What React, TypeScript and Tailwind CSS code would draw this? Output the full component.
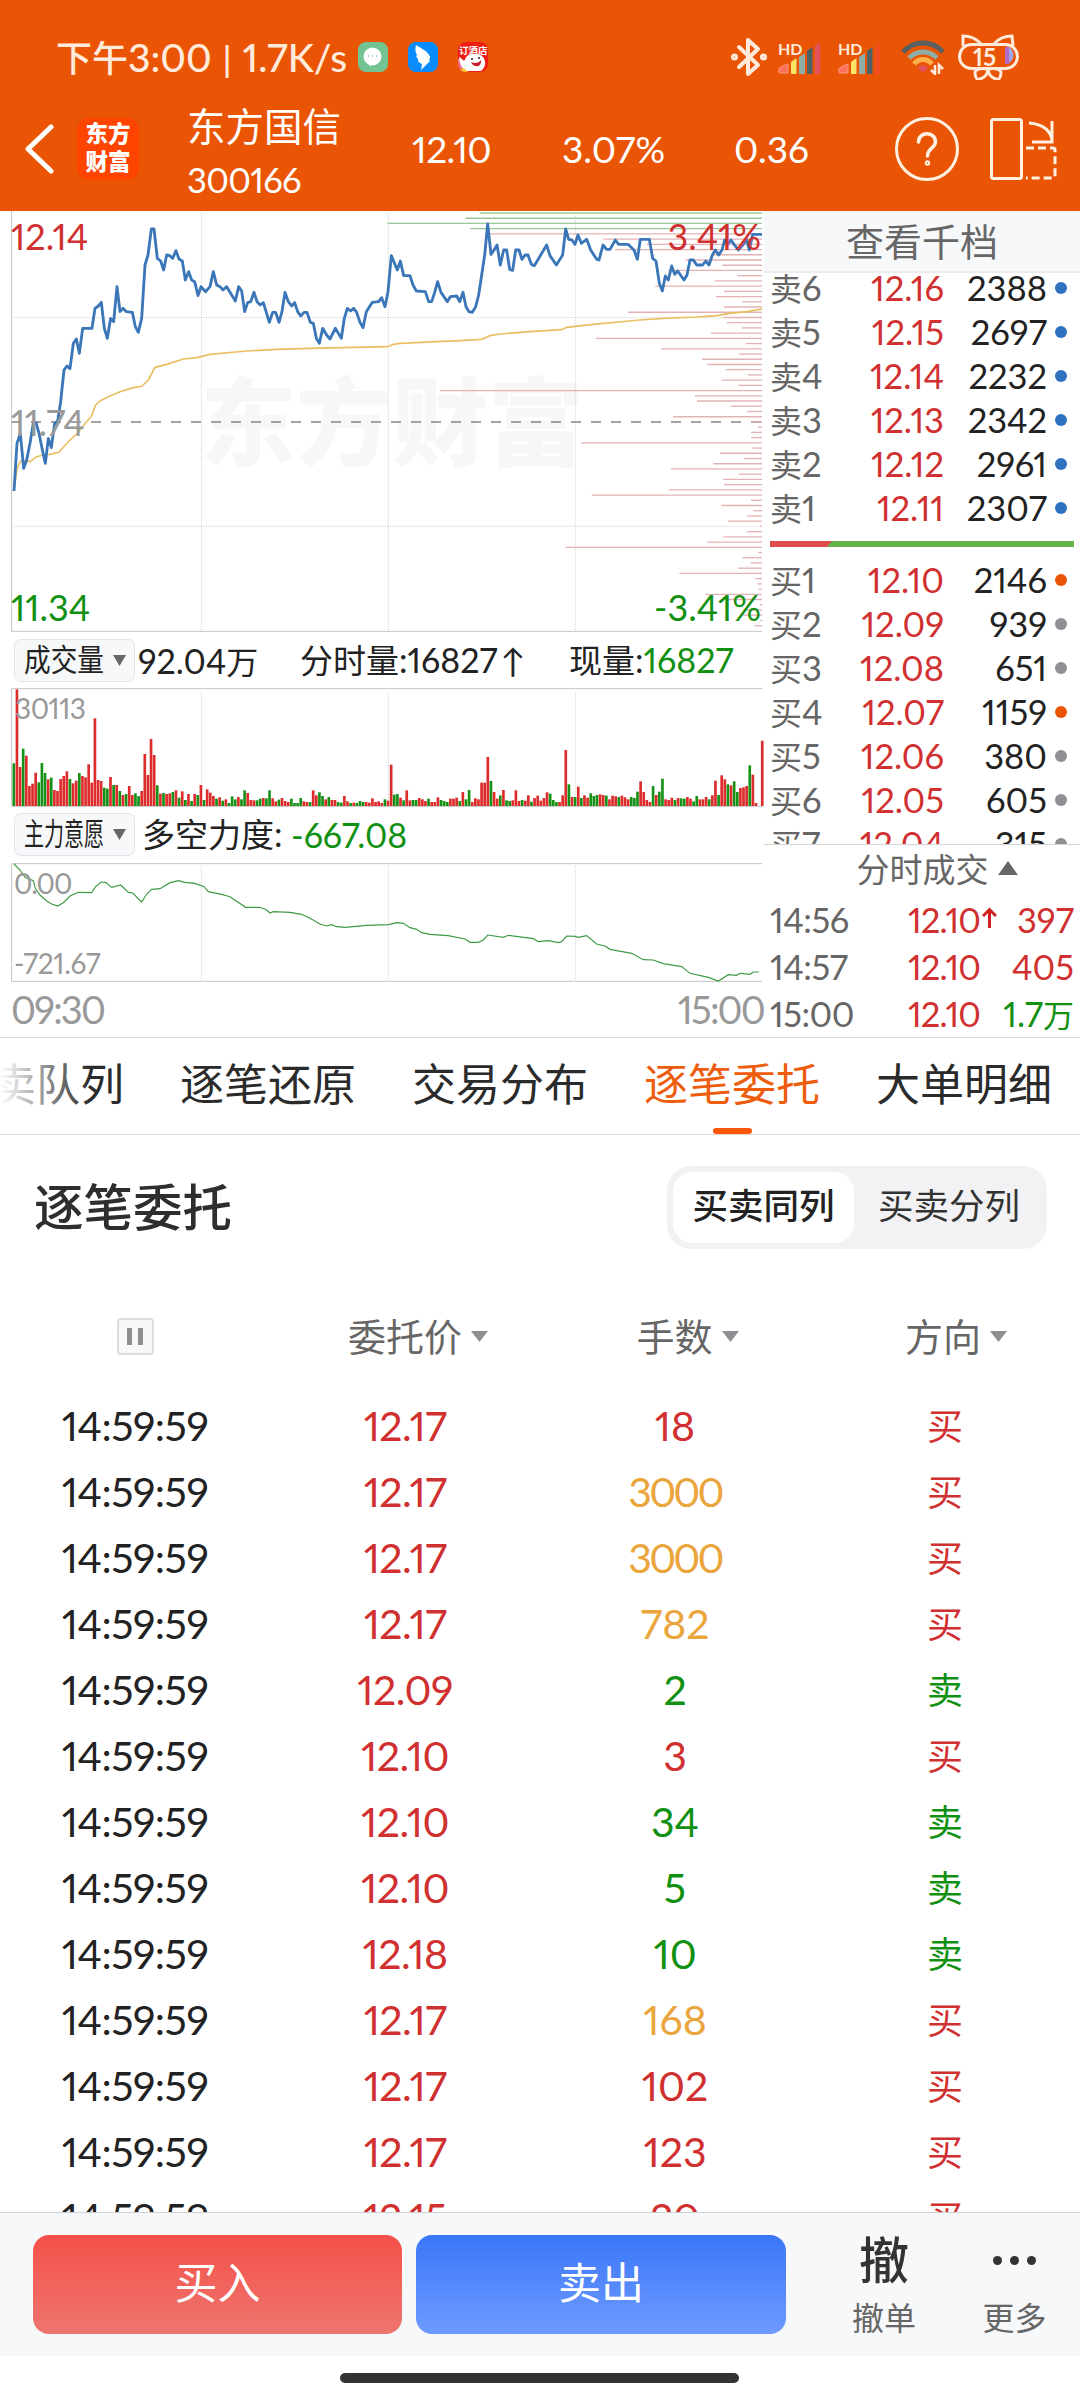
import type { ReactNode } from 'react';

type Level = { name: string; price: string; qty: string; dot: string };

const sells: Level[] = [
  { name: '卖6', price: '12.16', qty: '2388', dot: 'bg-[#2f72c0]' },
  { name: '卖5', price: '12.15', qty: '2697', dot: 'bg-[#2f72c0]' },
  { name: '卖4', price: '12.14', qty: '2232', dot: 'bg-[#2f72c0]' },
  { name: '卖3', price: '12.13', qty: '2342', dot: 'bg-[#2f72c0]' },
  { name: '卖2', price: '12.12', qty: '2961', dot: 'bg-[#2f72c0]' },
  { name: '卖1', price: '12.11', qty: '2307', dot: 'bg-[#2f72c0]' },
];

const buys: Level[] = [
  { name: '买1', price: '12.10', qty: '2146', dot: 'bg-[#e95504]' },
  { name: '买2', price: '12.09', qty: '939', dot: 'bg-[#8f8f94]' },
  { name: '买3', price: '12.08', qty: '651', dot: 'bg-[#8f8f94]' },
  { name: '买4', price: '12.07', qty: '1159', dot: 'bg-[#e95504]' },
  { name: '买5', price: '12.06', qty: '380', dot: 'bg-[#8f8f94]' },
  { name: '买6', price: '12.05', qty: '605', dot: 'bg-[#8f8f94]' },
  { name: '买7', price: '12.04', qty: '315', dot: 'bg-[#8f8f94]' },
];

const RED = 'text-[#d0302f]';
const GREEN = 'text-[#129012]';
const GOLD = 'text-[#eaa53c]';

const orders = [
  { price: '12.17', qty: '18', color: RED, side: '买' },
  { price: '12.17', qty: '3000', color: GOLD, side: '买' },
  { price: '12.17', qty: '3000', color: GOLD, side: '买' },
  { price: '12.17', qty: '782', color: GOLD, side: '买' },
  { price: '12.09', qty: '2', color: GREEN, side: '卖' },
  { price: '12.10', qty: '3', color: RED, side: '买' },
  { price: '12.10', qty: '34', color: GREEN, side: '卖' },
  { price: '12.10', qty: '5', color: GREEN, side: '卖' },
  { price: '12.18', qty: '10', color: GREEN, side: '卖' },
  { price: '12.17', qty: '168', color: GOLD, side: '买' },
  { price: '12.17', qty: '102', color: RED, side: '买' },
  { price: '12.17', qty: '123', color: RED, side: '买' },
  { price: '12.15', qty: '20', color: RED, side: '买' },
];

// chart data, three units to a pixel
const priceLine =
  '42,858 51,715 61,685 71,790 80,765 90,715 100,655 108,653 117,685 126,730 136,775 145,700 154,728 164,655 173,648 182,590 192,495 201,483 210,491 220,415 229,402 238,445 248,370 276,370 285,310 295,303 304,292 313,370 322,400 332,340 341,350 351,245 360,320 369,310 379,320 397,322 406,365 415,382 425,340 435,180 444,150 454,72 462,72 472,160 482,168 491,195 500,150 509,152 518,160 528,137 537,162 547,168 556,225 566,200 575,225 584,230 594,272 603,245 617,260 630,245 640,200 650,240 660,245 669,255 680,245 706,288 716,245 725,258 734,320 743,293 752,290 762,262 771,290 781,300 790,293 808,352 818,322 827,322 837,352 846,320 855,262 865,290 875,303 884,293 893,320 902,333 912,322 921,322 931,352 940,355 949,400 958,415 968,370 980,390 990,402 1006,370 1024,400 1033,340 1042,310 1052,318 1061,310 1070,322 1080,352 1089,368 1099,320 1117,292 1136,290 1145,278 1155,305 1164,260 1174,152 1192,195 1201,168 1211,212 1230,212 1239,240 1249,258 1276,260 1286,290 1295,290 1304,262 1313,230 1323,262 1342,290 1351,275 1370,273 1379,290 1389,262 1398,305 1407,320 1417,322 1427,305 1436,270 1445,210 1454,150 1463,57 1473,148 1482,135 1491,120 1501,180 1511,135 1520,135 1529,193 1538,196 1547,135 1557,135 1566,163 1575,150 1584,150 1594,178 1603,182 1640,120 1650,152 1669,180 1688,150 1697,72 1706,103 1716,105 1725,118 1734,90 1744,115 1760,103 1772,135 1790,163 1797,165 1809,120 1820,133 1830,133 1846,105 1856,118 1884,118 1902,135 1912,163 1921,103 1948,103 1958,160 1968,168 1978,235 1987,258 1996,213 2005,225 2015,183 2024,208 2033,198 2052,225 2061,210 2070,165 2080,165 2090,180 2108,180 2117,168 2127,180 2137,150 2146,135 2156,150 2166,135 2174,105 2183,118 2193,105 2202,118 2215,135 2230,118 2240,103 2248,135 2258,88 2286,88';

const averageLine =
  '42,858 51,790 62,768 90,770 110,755 130,750 150,748 176,742 210,705 232,685 250,662 275,632 287,600 300,588 325,575 360,560 400,548 425,544 445,525 465,487 500,478 550,462 590,458 630,448 740,438 830,433 930,430 1060,427 1164,425 1180,418 1200,415 1310,410 1380,407 1445,403 1470,392 1500,387 1590,380 1685,374 1700,367 1780,358 1920,345 1990,340 2090,336 2150,332 2190,325 2240,320 2286,312';

const forceLine =
  '42,702 60,720 75,742 100,752 106,775 120,795 140,813 155,822 173,828 190,818 210,798 235,787 275,788 287,770 303,756 318,758 335,772 362,765 385,787 398,789 425,816 440,792 455,778 480,776 510,758 535,752 555,757 585,760 612,770 625,785 665,793 690,800 737,832 780,832 800,840 810,849 820,845 870,847 905,853 930,865 960,882 980,888 995,884 1010,890 1035,892 1100,886 1165,884 1190,878 1210,880 1230,893 1250,898 1265,908 1290,913 1345,917 1395,927 1410,937 1435,937 1450,930 1463,915 1510,922 1525,916 1600,926 1615,935 1645,932 1675,938 1685,935 1700,918 1725,919 1735,922 1760,917 1790,942 1815,948 1830,958 1895,970 1930,989 1960,990 1990,1001 2045,1010 2070,1030 2125,1042 2155,1053 2185,1034 2210,1036 2220,1030 2250,1033 2260,1026 2277,1026';

// left end of each chip-distribution bar, top to bottom
const chips = [
  1439, 1397, 1162, 1410, 1465, 1810, 1940, 1846, 2140, 2057, 2167, 2005, 2212, 2145, 1966, 2172, 2147, 2227, 2172, 1884,
  2170, 2180, 2225, 2133, 1788, 2237, 1983, 2217, 2106, 2122, 2178, 2244, 2165, 2215, 1320, 2084, 2091, 2192, 2242, 2019,
  2254, 2274, 2253, 2254, 1743, 2258, 2160, 2232, 2140, 2013, 2217, 2169, 2172, 2007, 1775, 2253, 2165, 2260, 2242, 2184,
  2280, 2240, 2170, 2122, 1696, 2274, 2227, 2252, 2214, 2038, 2266, 2272, 2276, 2115, 2180, 2280, 2230, 2230, 2280, 2263,
];

const volumes =
  'G128 R350 R117 G172 R151 R60 R67 R100 G71 G129 G99 R80 G85 R48 R45 R81 R90 R104 G81 R68 R76 G99 R90 R86 R125 R70 R263 R78 R75 G55 G52 R87 G63 R63 G45 R33 G36 R60 R33 G38 G30 R45 R156 R93 R201 R153 G62 R37 G39 R36 R38 G42 R47 G25 R44 G18 R36 G15 R36 G33 R63 G18 R50 R40 R30 G22 R26 G16 R20 G9 G29 G20 R27 G20 G47 R39 R18 R17 G17 G22 R24 G23 G47 R23 R14 G19 R24 R15 R12 G22 G9 G9 G24 R14 R12 G12 R47 R32 G41 G30 R20 G27 R18 R18 G12 G10 R30 R14 G9 R10 G9 G15 G12 R12 R10 R23 R12 R14 R9 G20 R16 R124 G34 G36 R25 G17 R47 R17 G18 G18 R24 R20 R15 G22 R12 R12 R26 G18 G15 G12 R22 R22 R25 G15 R42 G20 G48 R12 R23 R20 R70 R70 R147 G75 R42 R22 G32 R48 G17 G15 R17 R47 R15 G18 R16 R32 G13 R24 R31 R16 R24 R41 G37 G18 G12 R12 R32 R168 G65 R27 G27 R58 G24 R32 R25 G38 G30 G33 R35 R33 G31 R20 R31 R29 G27 R31 R26 R20 G27 G24 G43 R74 R42 R18 R12 G60 R33 G43 G82 R20 R18 R25 G18 R24 G23 G22 R27 R22 G14 G30 R20 R20 R27 G20 R32 R76 G33 R92 R80 G65 R62 G74 G42 R54 R56 R60 G122 R94 R9 R0 R196'.split(
    ' ',
  );

function Grid({ top, bottom }: { top: number; bottom: number }) {
  return (
    <g stroke="#c4c4c4" strokeWidth="3" strokeDasharray="3 5">
      {[604, 1165, 1726].map((x) => (
        <line key={x} x1={x} x2={x} y1={top} y2={bottom} />
      ))}
    </g>
  );
}

function Signal({ faded }: { faded?: boolean }) {
  return (
    <div className="relative h-[35px] w-[43px]">
      <svg className="h-full w-full" viewBox="0 0 43 35">
        <path d="M1 33v-4q0-2 9-5v9z" fill="#ff6f5c" stroke="#ff9a78" strokeWidth="1" />
        <path d="M13 34V22l5.500-4v16z" fill="#ffe566" />
        <path d="M21 34V17l6-4v21z" fill="#8fada5" />
        <path d="M29 34V11l5.500-4v27z" fill="#4f6165" />
        <path d="M37 34V6l5.500-4v32z" fill={faded ? '#f0501c' : '#e4525c'} />
      </svg>
      <span className="absolute top-[1px] left-0 text-[16px] leading-[16px] font-bold text-[#ffeadb]">HD</span>
    </div>
  );
}

function StatusBar() {
  return (
    <div className="flex h-[114px] items-center pl-[56px] text-[#ffeadb]">
      <div className="w-[302px] text-[39px] font-medium whitespace-nowrap">
        <span className="text-[36px]">下午</span>
        <span>3:00</span>
        <span className="px-[11px] text-[34px] font-semibold">|</span>
        <span>1.7K/s</span>
      </div>
      <div className="flex gap-5">
        <svg className="size-[30px]" viewBox="0 0 30 30">
          <rect width="30" height="30" rx="8" fill="#73c393" />
          <circle cx="14.500" cy="14.500" r="9" fill="#fff" />
          <path d="M10 21l2 3 3-2z" fill="#fff" />
          <path d="M10 14h1M14 14h1M18 14h1" stroke="#73c393" strokeWidth="1.500" />
        </svg>
        <svg className="size-[30px]" viewBox="0 0 30 30">
          <rect width="30" height="30" rx="8" fill="#0a8cff" />
          <path d="M8 3c5 3 11 6 13 10 1 1 2 2 0 5l1 1-9 9 1-6-2-1c-2-1-2-2-2-4-2-2-2-3-1-4-2-3-2-7-1-10z" fill="#fff" />
        </svg>
        <div className="relative size-[30px] overflow-hidden rounded-[8px] bg-[#ee1c12]">
          <svg className="h-full w-full" viewBox="0 0 30 30">
            <path d="M0 17l6 1 3 12H0z" fill="#f36a8a" />
            <path d="M9 14c4-3 12-3 16 1 4 5 2 11-2 14H9C4 26 2 24 1 15c2 0 3 3 5 4z" fill="#fff" />
            <path d="M13 20c4 2 8 1 10-2 1 7-7 9-10 2z" fill="#c81e28" />
            <circle cx="14" cy="17" r="1" fill="#222" />
            <circle cx="21" cy="16" r="1" fill="#222" />
            <path d="M1 28l5-2 4 4H1z" fill="#ffc62d" />
          </svg>
          <span className="absolute top-[3px] left-[1px] text-[9.500px] leading-[12px] font-bold whitespace-nowrap text-white">订酒店</span>
        </div>
      </div>
      <svg className="ml-[243px] h-[40px] w-[36px]" viewBox="0 0 36 40" fill="none" stroke="#ffeadb" strokeWidth="4" strokeLinejoin="round" strokeLinecap="round">
        <path d="M8 10l19 18-10 9V3l10 9L8 30" />
        <circle cx="3.500" cy="20" r="1.500" />
        <circle cx="32.500" cy="20" r="1.500" />
      </svg>
      <div className="ml-[11px] flex gap-[17px]">
        <Signal />
        <Signal faded />
      </div>
      <svg className="ml-[20px] h-[36px] w-[44px]" viewBox="0 0 44 36" fill="none" strokeWidth="5">
        <path d="M2 13C13 1 31 1 42 13" stroke="#5a605f" />
        <path d="M8 19c8-8 20-8 28 0" stroke="#8fada5" />
        <path d="M13 25c5-6 13-6 18 0" stroke="#ffae4d" />
        <path d="M22 34l-4-4c-2-4 3-5 4-2 1-3 6-2 4 2z" fill="#e4525c" />
        <path d="M34 26v9l-4-4M38 35v-9l4 4" stroke="#ffeadb" strokeWidth="2.500" />
      </svg>
      <div className="relative ml-[13px] h-[46px] w-[61px]">
        <svg className="h-full w-full" viewBox="0 0 61 46" fill="none" stroke="#ffeadb" strokeWidth="3">
          <path d="M49 13h2c6 4 6 12 0 16h-4z" fill="#a4a4ec" stroke="none" />
          <path d="M47 13h4v17h-4z" fill="#b06cc8" stroke="none" />
          <rect x="1.500" y="10.500" width="58" height="24" rx="12" />
          <path d="M5 12V2c7 0 13 2 18 8M55 12l-1-10c-7 0-13 2-18 8" />
          <path d="M30 36c-5-3-12-1-13 2 0 6 2 8 5 7 4-1 7-4 8-9zM30 36c5-3 12-1 13 2 0 6-2 8-5 7-4-1-7-4-8-9z" />
        </svg>
        <span className="absolute top-[11px] left-[15px] text-[24px] leading-[24px] font-bold">15</span>
      </div>
    </div>
  );
}

function Header() {
  return (
    <div className="flex h-[97px] text-white">
      <svg className="mt-[10px] ml-[24px] h-[50px] w-[31px]" viewBox="0 0 31 50" fill="none" stroke="currentColor" strokeWidth="5" strokeLinecap="round" strokeLinejoin="round">
        <path d="M27 3L4 25l23 22" />
      </svg>
      <div className="mt-[4px] ml-[22px] flex h-[62px] w-[62px] flex-col items-center justify-center rounded-[12px] bg-[#ff4400] pb-[2px] text-[22.500px] leading-[28px] font-black">
        <span>东方</span>
        <span>财富</span>
      </div>
      <div className="-mt-[14px] ml-[48px] w-[225px]">
        <div className="text-[38.500px] leading-[52px]">东方国信</div>
        <div className="mt-[2px] text-[34.500px] leading-[51px] tracking-[-0.7px]">300166</div>
      </div>
      <div className="-mt-[1px] flex h-[72px] items-center text-[37px]">
        <span className="w-[150px] tracking-[-0.5px]">12.10</span>
        <span className="w-[172px]">3.07%</span>
        <span className="w-[161px]">0.36</span>
      </div>
      <div className="mt-[3px] flex size-[64px] items-center justify-center rounded-full border-[3px] border-[#fff1e2]">
        <svg className="h-[34px] w-[22px]" viewBox="0 0 22 34" fill="none" stroke="#fff1e2" strokeWidth="3.500" strokeLinecap="round">
          <path d="M2.500 10c0-11 17-11 17 0 0 6-8 6-8 14" />
          <circle cx="11.500" cy="31" r="1" />
        </svg>
      </div>
      <svg className="mt-[4px] ml-[31px] h-[62px] w-[67px]" viewBox="0 0 67 62" fill="none" stroke="#fff1e2" strokeWidth="3">
        <rect x="1.500" y="1.500" width="30" height="59" rx="2" />
        <path d="M39 5c14 1 23 8 23 19M62 3v21H42" />
        <path d="M36 30h27q2 0 2 2v26q0 2-2 2H36" strokeDasharray="8 4" />
      </svg>
    </div>
  );
}

function Picker({ label, squeeze }: { label: string; squeeze: string }) {
  return (
    <div className="flex h-[43px] w-[121px] items-center justify-between rounded-[7px] border border-[#e3e4ea] bg-[#f7f8fa] pr-[8px] pl-[9px]">
      <div className="-mt-[2px] w-[80px] text-[31px] leading-[40px] whitespace-nowrap text-[#222]">
        <div className={squeeze}>{label}</div>
      </div>
      <svg className="h-[11px] w-[13px]" viewBox="0 0 13 11">
        <path d="M0 0h13L6.500 11z" fill="#666" />
      </svg>
    </div>
  );
}

function Label({ className, children }: { className: string; children: ReactNode }) {
  return <span className={'absolute whitespace-nowrap ' + className}>{children}</span>;
}

function Charts() {
  return (
    <div className="w-[764px]">
      <div className="relative h-[423px]">
        <div className="absolute top-[160px] left-[200px] text-[96px] leading-[100px] font-black text-[#f7f7f7]">东方财富</div>
        <svg className="absolute inset-0 h-full w-[763px]" viewBox="0 18 2289 1269" fill="none">
          <Grid top={24} bottom={1275} />
          <g stroke="#c4c4c4" strokeWidth="3">
            <path d="M42 338H2286M42 964H2286" strokeDasharray="3 5" />
            <path d="M35 18V1279H2286" />
          </g>
          <path d="M36 651H2286" stroke="#858585" strokeWidth="5" strokeDasharray="30 30" strokeDashoffset="3" />
          {chips.map((x, i) => (
            <line key={i} x1={x} x2="2286" y1={24 + i * 15.67} y2={24 + i * 15.67} stroke={i < 4 ? '#9cc79a' : '#e3b3b4'} strokeWidth="4" />
          ))}
          <polyline points={averageLine} stroke="#eabf62" strokeWidth="5" />
          <polyline points={priceLine} stroke="#3a76b8" strokeWidth="8.500" strokeLinejoin="round" />
        </svg>
        <Label className={'top-[3px] left-[11px] text-[36px] leading-[44px] ' + RED}>12.14</Label>
        <Label className="top-[189px] left-[11px] text-[36px] leading-[44px] tracking-[-0.5px] text-[#999]">11.74</Label>
        <Label className={'top-[374px] left-[11px] text-[36px] leading-[44px] ' + GREEN}>11.34</Label>
        <Label className={'top-[3px] right-[3px] text-[36px] leading-[44px] ' + RED}>3.41%</Label>
        <Label className={'top-[374px] right-[3px] text-[36px] leading-[44px] ' + GREEN}>-3.41%</Label>
      </div>

      <div className="flex h-[54px] items-center pb-[2px] pl-[14px] text-[34px] text-[#222]">
        <Picker label="成交量" squeeze="origin-left scale-x-[0.86]" />
        <span className="ml-[3px] w-[162px]">
          92.04<span className="text-[32px]">万</span>
        </span>
        <span className="w-[269px]">
          <span className="text-[33px]">分时量</span>:16827<span className="pl-[3px] text-[33px]">↑</span>
        </span>
        <span>
          <span className="text-[33px]">现量</span>:<span className={GREEN}>16827</span>
        </span>
      </div>

      <div className="relative h-[119px]">
        <svg className="h-full w-[764px]" viewBox="0 174 2292 357" fill="none">
          <Grid top={188} bottom={525} />
          <path d="M2286 176H35V529H2286" stroke="#c4c4c4" strokeWidth="3" />
          {volumes.map((v, i) => (
            <rect key={i} x={37.5 + i * 9.355} y={528 - Number(v.slice(1))} width="8" height={Number(v.slice(1))} fill={v[0] === 'R' ? '#dc2c2c' : '#169116'} />
          ))}
        </svg>
        <Label className="top-[3px] left-[15px] text-[28px] leading-[34px] tracking-[-0.5px] text-[#999]">30113</Label>
      </div>

      <div className="flex h-[56px] items-center pb-[2px] pl-[14px] text-[34px] text-[#222]">
        <Picker label="主力意愿" squeeze="origin-left scale-x-[0.645]" />
        <span className="ml-[7px] w-[149px] whitespace-nowrap">
          <span className="text-[33px]">多空力度</span>:
        </span>
        <span className={GREEN}>-667.08</span>
      </div>

      <div className="relative h-[119px]">
        <svg className="h-full w-[764px]" viewBox="0 699 2292 357" fill="none">
          <Grid top={708} bottom={1050} />
          <path d="M2286 701H35V1054H2286" stroke="#c4c4c4" strokeWidth="3" />
          <polyline points={forceLine} stroke="#3f9a45" strokeWidth="3.500" />
        </svg>
        <Label className="top-[3px] left-[14px] text-[28px] leading-[34px] tracking-[-1px] text-[#999]">0.00</Label>
        <Label className="top-[83px] left-[14px] text-[28px] leading-[34px] tracking-[-0.3px] text-[#999]">-721.67</Label>
      </div>

      <div className="flex h-[54px] items-center justify-between pl-[11px] text-[38px] tracking-[-1.800px] text-[#999]">
        <span>09:30</span>
        <span>15:00</span>
      </div>
    </div>
  );
}

function LevelRow({ level }: { level: Level }) {
  return (
    <div className="flex h-[44px] items-center pl-[6px] text-[34.500px] leading-[44px]">
      <span className="w-[66px] whitespace-nowrap text-[#666]">
        <span className="text-[32px]">{level.name[0]}</span>
        {level.name[1]}
      </span>
      <span className={'w-[108px] text-right ' + RED}>{level.price}</span>
      <span className="w-[103px] text-right text-[#222]">{level.qty}</span>
      <span className={'ml-[8px] size-[12px] rounded-full ' + level.dot} />
    </div>
  );
}

function TickRow({ time, price, up, qty, color }: { time: string; price: string; up?: boolean; qty: ReactNode; color: string }) {
  return (
    <div className="flex h-[47px] items-center pl-[6px] text-[34.500px]">
      <span className="w-[138px] tracking-[-0.5px] text-[#666]">{time}</span>
      <span className={'w-[72px] tracking-[-0.8px] ' + RED}>{price}</span>
      <span className="w-[16px] pl-[2px]">
        {up && (
          <svg className="mb-[3px] h-[22px] w-[15px]" viewBox="0 0 15 22" fill="none" stroke="#d0201f" strokeWidth="3">
            <path d="M7.500 21V3M1 9l6.500-6.500L14 9" />
          </svg>
        )}
      </span>
      <span className={'w-[78px] text-right whitespace-nowrap ' + color}>{qty}</span>
    </div>
  );
}

function OrderBook() {
  return (
    <div className="w-[316px]">
      <div className="flex h-[62px] items-center justify-center border-b-2 border-[#ebebed] bg-[#f7f8fa] text-[38px] text-[#666]">查看千档</div>
      <div className="-mt-[7px] h-[264px]">
        {sells.map((l) => (
          <LevelRow key={l.name} level={l} />
        ))}
      </div>
      <div className="mt-[11px] mr-[6px] ml-[6px] flex h-[6px] bg-[#63b54b]">
        <div className="w-[62px] bg-[#dd4b4b] [clip-path:polygon(0_0,100%_0,calc(100%-5px)_100%,0_100%)]" />
      </div>
      <div className="mt-[11px] h-[287px] overflow-hidden border-b border-[#d5d5d5]">
        {buys.map((l) => (
          <LevelRow key={l.name} level={l} />
        ))}
      </div>
      <div className="flex h-[51px] items-center justify-center gap-[9px] pb-[1px] pl-[30px] text-[33px] text-[#666]">
        分时成交
        <svg className="mb-[4px] h-[14px] w-[20px]" viewBox="0 0 20 14">
          <path d="M0 14h20L10 0z" fill="#666" />
        </svg>
      </div>
      <TickRow time="14:56" price="12.10" up qty="397" color={RED} />
      <TickRow time="14:57" price="12.10" qty="405" color={RED} />
      <TickRow
        time="15:00"
        price="12.10"
        qty={
          <>
            1.7<span className="text-[31px]">万</span>
          </>
        }
        color={GREEN}
      />
    </div>
  );
}

function Tabs() {
  return (
    <div className="relative flex h-[98px] gap-[56px] overflow-hidden border-t border-b border-[#dcdcdc] text-[44px] leading-[93px] whitespace-nowrap text-[#2b2b2b]">
      <span className="-ml-[52px]">买卖队列</span>
      <span>逐笔还原</span>
      <span>交易分布</span>
      <span className="relative text-[#ee5d0e]">
        逐笔委托
        <i className="absolute bottom-0 left-[69px] h-[6px] w-[39px] rounded-[3px] bg-[#fb560a]" />
      </span>
      <span>大单明细</span>
      <div className="absolute inset-y-0 left-0 w-[90px] bg-linear-to-r from-white to-white/0" />
    </div>
  );
}

function Column({ label }: { label: string }) {
  return (
    <div className="flex items-center justify-center">
      <span>{label}</span>
      <svg className="-mr-[26px] ml-[9px] h-[11px] w-[17px]" viewBox="0 0 17 11">
        <path d="M0 0h17L8.500 11z" fill="#8e8e93" />
      </svg>
    </div>
  );
}

function Orders() {
  return (
    <div className="h-[1077px] overflow-hidden">
      <div className="flex h-[145px] items-center justify-between pr-[33px] pl-[34px]">
        <h2 className="text-[49.500px] font-medium text-[#2e2e2e]">逐笔委托</h2>
        <div className="flex h-[83px] w-[380px] items-center rounded-[24px] bg-[#f2f2f4] p-[6px] text-[35.500px] text-[#333]">
          <span className="flex h-[71px] w-[181px] items-center justify-center rounded-[20px] bg-white pb-[3px] font-medium text-[#222]">买卖同列</span>
          <span className="flex flex-1 items-center justify-center pb-[3px] pl-[3px]">买卖分列</span>
        </div>
      </div>
      <div className="grid h-[113px] grid-cols-[270px_270px_269px_268px] items-center text-[38px] text-[#666]">
        <div className="flex justify-center">
          <div className="flex h-[37px] w-[37px] items-center justify-center gap-[6px] rounded-[4px] border-2 border-[#dcdde2] bg-[#f7f8fa]">
            <i className="h-[17px] w-[5px] bg-[#8f8f8f]" />
            <i className="h-[17px] w-[5px] bg-[#8f8f8f]" />
          </div>
        </div>
        <Column label="委托价" />
        <Column label="手数" />
        <Column label="方向" />
      </div>
      {orders.map((o, i) => (
        <div key={i} className="grid h-[66px] grid-cols-4 items-center text-center text-[41px] leading-[66px]">
          <span className="tracking-[-0.5px] text-[#222]">14:59:59</span>
          <span className={'tracking-[-0.5px] ' + RED}>{o.price}</span>
          <span className={o.color + (o.qty.includes('000') ? ' tracking-[-2.800px]' : '')}>{o.qty}</span>
          <span className={'text-[36px] ' + (o.side === '买' ? RED : GREEN)}>{o.side}</span>
        </div>
      ))}
    </div>
  );
}

function BottomBar() {
  return (
    <>
      <div className="flex h-[144px] border-t border-[#cfd2d5] bg-[#f7f8fa] pl-[33px]">
        <button className="mt-[22px] h-[99px] w-[369px] rounded-[16px] bg-linear-to-b from-[#f45049] to-[#ed746e] pb-[2px] text-[43px] text-white">买入</button>
        <button className="mt-[22px] ml-[14px] h-[99px] w-[370px] rounded-[16px] bg-linear-to-b from-[#3a76f8] to-[#6e9aff] pb-[2px] text-[43px] text-white">卖出</button>
        <div className="ml-[33px] w-[130px] text-center">
          <div className="mt-[17px] text-[50px] leading-[60px] font-medium text-[#333]">撤</div>
          <div className="mt-[8px] text-[32px] leading-[40px] text-[#666]">撤单</div>
        </div>
        <div className="w-[131px] text-center">
          <div className="mt-[17px] flex h-[60px] items-center justify-center gap-[8px]">
            <i className="size-[9px] rounded-full bg-[#333]" />
            <i className="size-[9px] rounded-full bg-[#333]" />
            <i className="size-[9px] rounded-full bg-[#333]" />
          </div>
          <div className="mt-[8px] text-[32px] leading-[40px] text-[#666]">更多</div>
        </div>
      </div>
      <div className="flex h-[44px] items-center justify-center bg-white">
        <div className="mr-[1px] h-[10px] w-[399px] rounded-full bg-[#333]" />
      </div>
    </>
  );
}

export default function App() {
  return (
    <div className="h-[2400px] w-[1080px] overflow-hidden bg-white font-['Lato','Noto_Sans_CJK_SC',sans-serif] proportional-nums">
      <div className="h-[211px] bg-[#e95504]">
        <StatusBar />
        <Header />
      </div>
      <div className="flex h-[826px]">
        <Charts />
        <OrderBook />
      </div>
      <Tabs />
      <Orders />
      <BottomBar />
    </div>
  );
}
